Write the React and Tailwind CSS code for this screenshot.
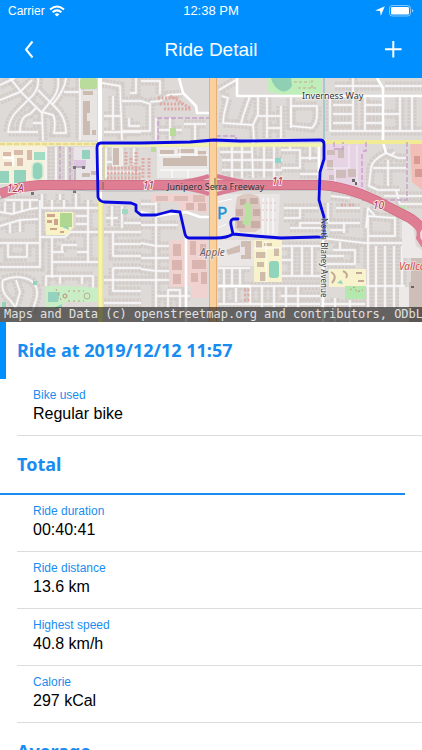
import React from 'react';

const totals = [
  { label: 'Ride duration', value: '00:40:41' },
  { label: 'Ride distance', value: '13.6 km' },
  { label: 'Highest speed', value: '40.8 km/h' },
  { label: 'Calorie', value: '297 kCal' },
];

// Residential streets, each one is lined with houses
const streets = [
  'M10 0L22 15L42 35L43 63',
  'M38 0Q40 12 28 22L18 32Q9 40 8 54H38',
  'M36 30L30 36Q20 38 20 54',
  'M0 7L15 0',
  'M0 22L20 14L32 2',
  'M58 0Q60 14 50 24L42 34L53 37Q56 42 54 55H66Q66 38 54 28L46 20L38 12',
  'M66 0Q65 12 52 27',
  'M64 14H79',
  'M33 45H43',
  'M80 0V62',
  'M102 5L120 8L122 62',
  'M113 18V52',
  'M122 23H141L150 26V53H122',
  'M136 0V15H130',
  'M129 40V48H140',
  'M104 54H141',
  'M104 38H122',
  'M150 24L160 23L168 17L182 16',
  'M141 3H160V16',
  'M156 40V62',
  'M156 52H182M170 40V62M184 46H206M195 46V62',
  'M219 12L236 2',
  'M222 18L228 20L224 36L223 45L253 47L254 62',
  'M250 18L243 38L241 46',
  'M267 18V60M253 47L258 36V18M258 38H282M267 50H282',
  'M254 62L252 70L253 100',
  'M220 74H252M222 82H282M222 92H282M232 67V100M242 67V100M264 67V100M274 67V100',
  'M291 28V48L312 50Q317 45 317 37V28H291',
  'M281 28V60M291 10V50',
  'M330 18V53H422',
  'M353 0V53M365 18V53M400 18V53M412 18V53',
  'M333 27H353M333 36H353M333 45H353M365 27H382M365 36H382M365 45H382M383 36H400',
  'M335 8H380M385 8H422',
  'M281 72H300V90H281M300 80H318M290 72V66M310 66V82M300 96H318',
  'M386 75Q372 82 371 90L369 108L378 112H400',
  'M386 75L398 80H406M373 90H406M388 82V108M395 74L390 78',
  'M8 86H20M46 69V103M56 69V103M66 69V103M75 70V103',
  'M106 70V100M122 70V92M134 70V84M106 94H141M106 84H122',
  'M0 134L12 136L30 131L38 130M5 124V134M14 124V136M22 122V133M30 122V131',
  'M0 148L20 142L38 141M10 146V155M20 142V154',
  'M0 165H40V122M0 189H40V165',
  'M8 166V179H27V166',
  'M40 159H65L70 154H98',
  'M88 122V184M76 122V130H88M76 138H88M76 146H88M64 122V130M52 122V132M77 174H88',
  'M52 159V200M52 184H98M62 174V167H77M52 174H64',
  'M46 208V198H93V210M60 198V206M82 198V206',
  'M3 202Q0 214 10 222L16 230M3 202Q18 196 30 202Q40 208 36 222L32 234M16 202L20 214L16 228',
  'M104 154H141M113 154V178H141M113 166H141M113 190H141M113 190V213H141M104 202H141M104 225H141',
  'M106 140H118M112 128V148M122 128V150M124 145H141',
  'M156 122V230M141 126H156M141 147H178M141 165L156 168H170M141 180H170M141 191L156 193H170M141 202H170',
  'M168 230V212H180V230M156 218H190',
  'M218 208H320M224 190V226M232 190V208M240 190V208M250 208V226M262 208V230M274 208V230M286 208V230M298 208V230',
  'M236 210V224M218 190H250M218 226H320',
  'M281 168H322M292 168V198M302 168V198M312 168V198M281 198H321M281 182H292M281 218H320',
  'M321 160L365 165H407',
  'M300 150V145H322M284 130H318M284 140H300V130M290 150H322',
  'M328 125V145H344V155M336 130H360M344 145H360M330 152H345',
  'M368 165V138L395 140V158H368M375 138L368 130L366 150',
  'M333 172H355V186H325M340 172V164M326 178H344',
  'M368 165V230M376 168V230M385 168V230M394 168V230M402 168V230M365 208H405',
  'M323 226H365M335 220V244M350 222V244',
  'M331 110H362M331 118L350 120M384 118H422M396 112L400 126H422',
  'M5 122H38M42 116V130H98M60 116V122M76 116V122',
];

// Wider white roads, drawn over the streets
const avenues = [
  'M100 0V64',
  'M179 0L183 15L196 28L197 35H209',
  'M237 0V18H422',
  'M377 0L383 10V64L386 75',
  'M323 160V244',
  'M319 66V100',
  'M186 160V244',
  'M218 208H250',
  'M141 134L156 138L186 134L200 139H210',
];

const route =
  'M238 141L233 141Q230 142 231 147L233 156Q227 160 216 160L189 160Q186 160 185 156L180 134L171 133L156 137L141 137L136 133L136 127L131 125L104 124Q99 123 98 119L97 70Q97 65 101 65L141 65L190 64L214 62L240 63L320 62Q324 62 324 66L324 81L320 94L319 122L324 139L324 157Q323 160 318 159L281 160L255 158L233 156';

const RouteMap = () => (
  <svg
    viewBox="0 0 422 244"
    className="block w-full h-auto"
    role="img"
    aria-label="Map of the ride"
    fontFamily='"Noto Sans", sans-serif'
  >
    <rect width="422" height="244" fill="#dedad7" />

    {/* houses and streets */}
    <g fill="none">
      {streets.map((d) => (
        <path key={d} d={d} stroke="#d2cbc7" strokeWidth="9" strokeDasharray="2.6 1" />
      ))}
      {streets.map((d) => (
        <path key={d} d={d} stroke="#dddad9" strokeWidth="3.6" />
      ))}
      {streets.map((d) => (
        <path key={d} d={d} stroke="#fbfafa" strokeWidth="1.5" strokeLinejoin="round" />
      ))}
    </g>

    {/* land use */}
    <rect x="80" y="0" width="17" height="11" rx="2" fill="#b9dc9c" />
    <rect x="81" y="12" width="16" height="50" fill="#e8e4e2" />
    <path d="M83 13h10v4h-10zM83 23h7v12h-3v8h3v14h-7zM92 52h4v5h-4z" fill="#cbbbb0" />
    <rect x="0" y="68" width="45" height="38" fill="#f6f0dc" />
    <path d="M3 74h8v4h-8zM14 72h9v5h-9zM4 84h9v4h-9zM17 80h6v8h-6zM27 72h5v10h-5z" fill="#d9b9a8" />
    <path d="M3 79h11v2h-11zM12 76h2v12h-2z" fill="#fff" />
    <rect x="0" y="93" width="9" height="12" fill="#93d2bd" />
    <rect x="14" y="92" width="12" height="13" fill="#93d2bd" />
    <rect x="34" y="74" width="11" height="8" fill="#a3dcc4" />
    <rect x="32" y="84" width="11" height="18" rx="5" fill="#93d2bd" stroke="#d6efd3" strokeWidth="1.5" />
    <rect x="74" y="69" width="23" height="34" fill="#e9e4e8" />
    <rect x="82" y="72" width="8" height="9" fill="#93d2bd" />
    <path d="M74 82h12v8h-12z" fill="#dcc5e0" />
    <path d="M82 95h8v4h-8zM91 93h5v4h-5z" fill="#cbbbb0" />
    <path d="M75 89V114M74 89H83" stroke="#76737a" strokeWidth="0.7" fill="none" />
    <path d="M73 88h3v3h-3zM82 88h3v3h-3zM73 112h3v3h-3zM31 114h3v3h-3z" fill="#76737a" />
    <rect x="112" y="69" width="10" height="20" fill="#efecea" />
    <rect x="113" y="70" width="6" height="17" fill="#cbbbb0" />

    {/* apartment blocks */}
    <g fill="none" stroke="#dfa9a4" strokeWidth="3" strokeDasharray="2 1.5">
      <path d="M107 90H141M107 95H141M107 100H141M126 74V88M136 74V100M131 80V88" />
      <path d="M143 80V101M149 80V101" />
      <path d="M158 20L178 20M160 26L184 26M164 31L192 31M170 18L190 30" />
      <path d="M244 212H251M244 217H251M244 222H251" />
      <path d="M341 127H346M349 127H354" />
    </g>

    {/* shopping area north of the freeway */}
    <rect x="157" y="69" width="52" height="31" fill="#eceae8" />
    <path d="M160 72h14v4h-14zM178 71h16v4h-16zM198 73h8v5h-8zM163 80h18v-2h26v10h-44z" fill="#cbbbb0" />
    <path d="M159 77H208M180 69V78M196 69V78M160 92H208M172 92V100M188 92V100" stroke="#fff" fill="none" />
    <rect x="170" y="50" width="6" height="8" fill="#b9dc9c" />
    <rect x="151" y="69" width="5" height="5" fill="#b9dc9c" />

    {/* offices and campus */}
    <path d="M151 116h56v8h-56z" fill="#f0d3d1" />
    <path d="M156 118h12v5h-12zM174 118h14v5h-14zM193 117h12v7h-12z" fill="#dcbcb5" />
    <path d="M178 124h30v12l-12-3h-16z" fill="#f0d3d1" />
    <path d="M186 125h8v7h-8zM198 125h8v8h-8z" fill="#d9b5af" />
    <path d="M169 162h16v47h-16zM188 160h20v48h-20zM192 208h16v12h-16z" fill="#f0d3d1" />
    <path d="M173 166h8v12h-8zM172 182h10v10h-10zM173 196h8v10h-8zM190 163h6v14h-6zM200 166h6v12h-6zM192 182h14v9h-14zM191 195h7v9h-7zM201 194h6v12h-6z" fill="#dab4af" />
    <path d="M218 116h62l-2 42h-24l-22-2-14 4z" fill="#e9e6e5" />
    <path d="M218 162h36v26h-36z" fill="#e9e6e5" />
    <path d="M237 119Q248 112 259 119L261 132V150L255 154H240L235 150V132z" fill="#dccac2" />
    <path d="M240 121h6v6h-6zM250 120h8v6h-8zM236 131h7v7h-7zM253 131h7v7h-7zM237 143h8v7h-8zM251 143h9v7h-9z" fill="#c9aea5" />
    <path d="M244 126L250 124L252 134L250 148L242 146L246 136z" fill="#b9e0a0" />
    <path d="M226 172l14-5v7l-12 3zM241 163h10v18h-10v-4h4v-8h-4z" fill="#cfbdb4" />
    <path d="M218 124L232 121M218 150L226 146M263 120V156M268 120V156M273 120V156" stroke="#fff" fill="none" />
    <path d="M262 125H276M262 132H276M262 142H276" stroke="#e6c4c0" strokeDasharray="2 2" fill="none" />
    <rect x="254" y="162" width="28" height="42" fill="#f8f3cd" />
    <path d="M256 163h6v7h-6zM264 165h8v3h-8zM256 174h10v6h-10zM257 184h7v5h-7zM260 194h6v9h-6zM274 170h5v8h-5z" fill="#cfbca8" />
    <rect x="269" y="183" width="10" height="17" rx="3" fill="#8fd4bb" />
    <path d="M254 170H281M266 163V204" stroke="#fff" fill="none" />
    <rect x="122" y="131" width="6" height="5" fill="#a0d8c5" />

    {/* parks and schools */}
    <path d="M268 0H322V18H290L268 14z" fill="#bfeebb" />
    <path d="M271 0H291L292 8Q288 15 281 13Q273 9 271 0z" fill="#8fd0b5" />
    <path d="M294 4H310M298 10H316M312 2V12" stroke="#c7a989" strokeDasharray="3 2" fill="none" />
    <rect x="275" y="80" width="6" height="5" fill="#8fd4c8" />
    <path d="M45 134h28v16l-6 7h-21z" fill="#f8f3c4" />
    <rect x="60" y="135" width="12" height="14" fill="#b0d790" />
    <path d="M47 136h8v3h-8zM47 142h5v3h-5zM54 141h4v6h-4zM50 150h7v2h-7zM60 153h4v2h-4z" fill="#cda58e" />
    <path d="M62 149L68 148L69 152z" fill="#8fd4bb" />
    <path d="M45 208H70L98 210V224H66L60 230H46z" fill="#c9edc4" />
    <path d="M48 214H60L58 224H48zM54 230H62V226z" fill="#93d2bd" />
    <circle cx="65" cy="218" r="2" fill="none" stroke="#b98b74" />
    <circle cx="87" cy="218" r="3" fill="none" stroke="#b9b08a" />
    <path d="M56 211L62 224M68 213H84M68 223H84" stroke="#c29a82" strokeDasharray="2 3" fill="none" />
    <path d="M33 203h4v4h-4zM2 224h4v5h-4z" fill="#93d2bd" />
    <rect x="329" y="191" width="37" height="18" fill="#f8f3cd" />
    <path d="M331 194Q338 198 332 205M343 193Q349 196 346 200M356 195H362M358 203H364" stroke="#c3a898" strokeWidth="2" fill="none" />
    <path d="M337 205L341 202L343 206z" fill="#8fd4bb" />
    <rect x="345" y="208" width="21" height="13" fill="#b3e8ae" />
    <path d="M350 212L354 209L357 214L363 212" stroke="#c98f6b" strokeDasharray="2 2" fill="none" />
    <path d="M401 128h5v5h-14z" fill="#b3e8ae" />

    {/* east side industry and mall */}
    <path d="M325 66H366V120Q345 108 325 106z" fill="#e6d3e3" />
    <path d="M327 72h8v5h-8zM327 82h6v10h-6zM336 92h10v8h-10zM348 91h8v8h-8zM338 70h6v10h-6zM329 97h5v5h-5z" fill="#cdbcba" />
    <path d="M349 67V90M357 67V105M325 90H349M335 90V104" stroke="#f7f2f6" fill="none" />
    <path d="M410 66L422 64V112L412 104z" fill="#f1bfb7" />
    <path d="M414 78h6v8h-6zM415 91h7v8h-7z" fill="#d99a93" />
    <path d="M402 144L412 142L416 168L422 172V180H402z" fill="#ece9e8" />
    <rect x="399" y="209" width="12" height="26" fill="#ece9e8" />
    <path d="M411 180H422V244H409V204H411z" fill="#cdbfb7" />
    <path d="M411 208h3v2h-3z" fill="#666" />
    <path d="M352 101h3v3h-3zM355 104h2v3h-2z" fill="#666" />

    {/* avenues */}
    <g fill="none" stroke="#fff" strokeWidth="2.6" strokeLinejoin="round">
      {avenues.map((d) => (
        <path key={d} d={d} />
      ))}
    </g>
    <path d="M324 0V61" stroke="#a6c9cb" strokeWidth="2" />

    {/* secondary roads */}
    <path d="M0 66H98" stroke="#f3edb4" strokeWidth="4" />
    <path d="M0 66H98" stroke="#dfc56c" strokeWidth="1.2" strokeDasharray="5 2" />
    <path d="M98 67H324" stroke="#f4f5ae" strokeWidth="3.5" />
    <path d="M324 64H422" stroke="#f2eb96" strokeWidth="4" />
    <path d="M100 0V128" stroke="#fff" strokeWidth="4" />
    <path d="M104 67V110" stroke="#d9d68b" strokeWidth="1.2" />
    <path d="M100.5 122V244" stroke="#dedb99" strokeWidth="5" />
    <path d="M100.5 122V244" stroke="#f6f4a6" strokeWidth="4" />

    {/* district borders */}
    <g fill="none" stroke="#c9a0cc" strokeWidth="1.4" strokeDasharray="5 2">
      <path d="M60 68V108H70V68" />
      <path d="M158 62V40H212V58H236V62" />
      <path d="M334 64V71H343V64M362 76V118M366 64V73H362M407 64V122H362" />
    </g>

    {/* freeway */}
    <g fill="none" strokeLinejoin="round">
      <path d="M0 121Q18 112 40 111L97 113H141L190 112L211 117M216 117L238 112H320" stroke="#aeb6bd" />
      <path d="M168 106Q195 103 209 98M168 108Q195 111 209 116M256 106Q235 103 217 98M256 108Q235 111 217 116" stroke="#d97c93" strokeWidth="4" />
      <path d="M0 116Q18 108 40 107H320Q345 108 375 122L404 137Q414 141 424 153" stroke="#cf6b84" strokeWidth="10" />
      <path d="M0 116Q18 108 40 107H320Q345 108 375 122L404 137Q414 141 424 153" stroke="#df7d93" strokeWidth="8.5" />
      <path d="M411 144Q421 150 418 160L423 168" stroke="#df7d93" strokeWidth="4" />
      <path d="M424 150Q418 156 424 162" stroke="#e9e6e5" strokeWidth="1.5" />
    </g>
    <path d="M213 0V244" stroke="#dfa566" strokeWidth="8" />
    <path d="M213 0V244" stroke="#fad09c" strokeWidth="6.5" />
    <path d="M215 100V111M103 104V111" stroke="#7a6a3f" strokeWidth="1" />

    {/* recorded track */}
    <path d={route} fill="none" stroke="#0808e0" strokeWidth="2.8" strokeLinejoin="round" strokeLinecap="round" />

    {/* labels */}
    <g stroke="#fff" strokeOpacity="0.5" strokeWidth="1.5" paintOrder="stroke" fill="#333">
      <text x="302" y="21" fontSize="9">Inverness Way</text>
      <text x="167" y="112" fontSize="9" strokeOpacity="0.15">Junipero Serra Freeway</text>
      <text x="200" y="178" fontSize="10" fontStyle="italic" fill="#6f5a62">Apple</text>
      <text x="399" y="192" fontSize="10" fontStyle="italic" fill="#d84a4a">Vallco</text>
      <text transform="translate(321 140) rotate(90)" fontSize="8">North Blaney Avenue</text>
    </g>
    <g fontSize="10" fontStyle="italic" fill="#a5364f" stroke="#fbe3e6" strokeWidth="2" paintOrder="stroke">
      <text x="7" y="114">12A</text>
      <text x="143" y="111">11</text>
      <text x="272" y="107">11</text>
      <text x="373" y="131">10</text>
    </g>
    <text x="217" y="141" fontSize="17" fill="#1b93d2" stroke="#1b93d2" strokeWidth="0.4">P</text>
  </svg>
);

const StatusBar = () => (
  <div className="h-[22px] px-2 grid grid-cols-3 items-center">
    <div className="flex items-center gap-1">
      <span className="text-xs">Carrier</span>
      <svg viewBox="0 0 16 12" className="w-4 h-3" fill="none" stroke="currentColor" aria-hidden="true">
        <path d="M1 4.5Q8 -1.5 15 4.5" strokeWidth="2" />
        <path d="M3.6 7.2Q8 3.6 12.4 7.2" strokeWidth="2" />
        <path d="M8 11.6L5.6 9.2Q8 7.2 10.4 9.2Z" fill="currentColor" stroke="none" />
      </svg>
    </div>
    <span className="text-center text-[13px]">12:38 PM</span>
    <div className="flex items-center justify-end gap-1">
      <svg viewBox="0 0 10 10" className="w-[10px] h-[10px]" fill="currentColor" aria-hidden="true">
        <path d="M9.8 0.2L5.8 9.8L5 5L0.2 4.6Z" />
      </svg>
      <svg viewBox="0 0 25 12" className="w-[25px] h-3" fill="none" aria-hidden="true">
        <rect x="0.5" y="0.5" width="21" height="10.5" rx="2.8" stroke="#fff" strokeOpacity="0.5" />
        <rect x="2" y="2" width="18" height="7.5" rx="1.2" fill="#fff" />
        <path d="M23 4V7.6Q24.3 7 24.3 5.8Q24.3 4.6 23 4Z" fill="#fff" fillOpacity="0.6" />
      </svg>
    </div>
  </div>
);

const SectionTitle = ({ children }) => (
  <h2 className="px-[17px] py-[15px] font-['Noto_Sans',sans-serif] font-bold text-[18px] leading-[27px] text-[#188cf0]">
    {children}
  </h2>
);

// Section title with a rule under it
const RuledTitle = ({ children }) => (
  <div className="mr-[17px] border-b-2 border-[#188cf0]">
    <SectionTitle>{children}</SectionTitle>
  </div>
);

const Row = ({ label, value }) => (
  <div className="ml-[17px] pl-4 pt-2 pb-[10px] border-b border-[#dcdcdc]">
    <dt className="text-xs leading-4 text-[#188cf0]">{label}</dt>
    <dd className="text-base leading-[22px] text-black">{value}</dd>
  </div>
);

const App = () => {
  return (
    <div className="h-screen flex flex-col bg-white overflow-hidden font-['Liberation_Sans',Arial,sans-serif]">
      <header className="flex-shrink-0 bg-[#008fff] text-white">
        <StatusBar />
        <nav className="h-14 px-4 flex items-center justify-between">
          <button type="button" aria-label="Back" className="w-6 h-6 flex items-center justify-center">
            <svg viewBox="0 0 24 24" className="w-6 h-6" fill="none" stroke="currentColor" strokeWidth="2">
              <path d="M16.5 3.5L10 11.5L16.5 19.5" />
            </svg>
          </button>
          <h1 className="text-[19px] leading-6">Ride Detail</h1>
          <button type="button" aria-label="Add" className="w-6 h-6 flex items-center justify-center">
            <svg viewBox="0 0 24 24" className="w-6 h-6" fill="none" stroke="currentColor" strokeWidth="2">
              <path d="M11.3 3V19.5M3 11.3H19.6" />
            </svg>
          </button>
        </nav>
      </header>

      <main className="flex-1 min-h-0 overflow-y-auto [scrollbar-width:none]">
        <div className="relative">
          <RouteMap />
          <p className="absolute inset-x-0 bottom-0 h-[15px] px-1 overflow-hidden whitespace-nowrap bg-black/55 text-[#e0e0e0] font-['DejaVu_Sans_Mono',monospace] text-xs leading-[15px]">
            Maps and Data (c) openstreetmap.org and contributors, ODbL
          </p>
        </div>

        <section>
          <div className="border-l-[6px] border-[#008fff] -indent-[6px]">
            <SectionTitle>Ride at 2019/12/12 11:57</SectionTitle>
          </div>
          <dl>
            <Row label="Bike used" value="Regular bike" />
          </dl>
        </section>

        <section>
          <RuledTitle>Total</RuledTitle>
          <dl>
            {totals.map((item) => (
              <Row key={item.label} label={item.label} value={item.value} />
            ))}
          </dl>
        </section>

        <section>
          <RuledTitle>Average</RuledTitle>
        </section>
      </main>
    </div>
  );
};

export default App;
